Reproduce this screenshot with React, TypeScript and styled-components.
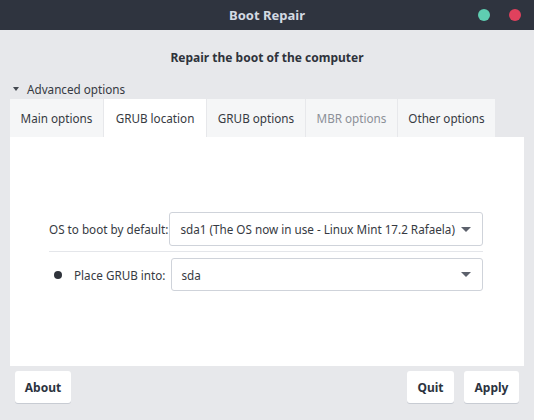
import React from "react";
import styled, { createGlobalStyle } from "styled-components";

const GlobalStyle = createGlobalStyle`
  html, body {
    margin: 0;
    padding: 0;
    background: #e7e8eb;
    font-family: "Noto Sans", "Open Sans", sans-serif;
    font-size: 11.7px;
    color: #363a42;
  }
`;

const Window = styled.div`
  width: 534px;
  height: 420px;
  display: flex;
  flex-direction: column;
  background: #e7e8eb;
  overflow: hidden;
`;

const TitleBar = styled.div`
  height: 30px;
  flex: none;
  background: #2f343f;
  position: relative;
  display: flex;
  align-items: center;
  justify-content: center;
  color: #d3dae3;
  font-weight: bold;
  font-size: 13px;
`;

const WinButtons = styled.div`
  position: absolute;
  right: 13px;
  top: 9px;
  display: flex;
  gap: 19px;
`;

const Dot = styled.span<{ $color: string }>`
  width: 12px;
  height: 12px;
  border-radius: 50%;
  background: ${(p) => p.$color};
`;

const Body = styled.div`
  flex: 1;
  display: flex;
  flex-direction: column;
  padding: 0 10px;
`;

const Heading = styled.div`
  margin-top: 19px;
  height: 18px;
  line-height: 18px;
  text-align: center;
  font-weight: bold;
  font-size: 12px;
  color: #2f333b;
`;

const Expander = styled.div`
  margin-top: 13px;
  height: 18px;
  display: flex;
  align-items: center;
  gap: 8px;
  padding-left: 3px;
`;

const Arrow = styled.span`
  width: 0;
  height: 0;
  border-left: 3.5px solid transparent;
  border-right: 3.5px solid transparent;
  border-top: 4px solid #444850;
`;

const Tabs = styled.div`
  margin-top: 1px;
  height: 38px;
  display: flex;
`;

const Tab = styled.div<{ $active?: boolean; $disabled?: boolean; $w: number }>`
  width: ${(p) => p.$w}px;
  display: flex;
  align-items: center;
  justify-content: center;
  background: ${(p) => (p.$active ? "#ffffff" : "#f5f6f7")};
  color: ${(p) => (p.$disabled ? "#8c9098" : "#363a42")};
  border-right: 1px solid #e7e8eb;
  box-sizing: border-box;
`;

const Panel = styled.div`
  height: 229px;
  background: #ffffff;
  display: flex;
  flex-direction: column;
  justify-content: center;
  padding: 0 41px 0 39px;
`;

const Row = styled.div`
  display: flex;
  align-items: center;
`;

const Separator = styled.div`
  height: 1px;
  background: #e4e6ea;
  margin: 5px 0 6px;
`;

const Label = styled.span`
  white-space: nowrap;
  margin-right: 1px;
`;

const Bullet = styled.span`
  width: 8px;
  height: 8px;
  border-radius: 50%;
  background: #2f333b;
  margin: 0 12px 0 5px;
`;

const Combo = styled.div<{ $h: number; $gap: number }>`
  flex: 1;
  min-width: 0;
  margin-left: ${(p) => p.$gap}px;
  height: ${(p) => p.$h}px;
  box-sizing: border-box;
  border: 1px solid #cfd3da;
  border-radius: 3px;
  display: flex;
  align-items: center;
  justify-content: space-between;
  padding: 0 11px 0 10px;
  white-space: nowrap;
`;

const ComboArrow = styled.span`
  flex: none;
  width: 0;
  height: 0;
  border-left: 5px solid transparent;
  border-right: 5px solid transparent;
  border-top: 5px solid #5c616c;
`;

const Footer = styled.div`
  margin-top: 5px;
  display: flex;
  padding: 0 5px;
  gap: 10px;
`;

const Spacer = styled.div`
  flex: 1;
`;

const Button = styled.button<{ $w: number }>`
  width: ${(p) => p.$w}px;
  height: 32px;
  border: none;
  border-radius: 3px;
  background: #ffffff;
  box-shadow: 0 1px 0 #c8ccd3;
  font-family: inherit;
  font-size: 12px;
  font-weight: bold;
  color: #2c3340;
  padding: 0;
`;

const tabs = [
  { label: "Main options", w: 94 },
  { label: "GRUB location", w: 103, active: true },
  { label: "GRUB options", w: 99 },
  { label: "MBR options", w: 92, disabled: true },
  { label: "Other options", w: 98 },
];

export default function App() {
  return (
    <Window>
      <GlobalStyle />
      <TitleBar>
        Boot Repair
        <WinButtons>
          <Dot $color="#5fcdb1" />
          <Dot $color="#e0415d" />
        </WinButtons>
      </TitleBar>
      <Body>
        <Heading>Repair the boot of the computer</Heading>
        <Expander>
          <Arrow />
          Advanced options
        </Expander>
        <Tabs>
          {tabs.map((t) => (
            <Tab key={t.label} $w={t.w} $active={t.active} $disabled={t.disabled}>
              {t.label}
            </Tab>
          ))}
        </Tabs>
        <Panel>
          <Row>
            <Label>OS to boot by default:</Label>
            <Combo $h={34} $gap={0}>
              sda1 (The OS now in use - Linux Mint 17.2 Rafaela)
              <ComboArrow />
            </Combo>
          </Row>
          <Separator />
          <Row>
            <Bullet />
            <Label>Place GRUB into:</Label>
            <Combo $h={33} $gap={4}>
              sda
              <ComboArrow />
            </Combo>
          </Row>
        </Panel>
        <Footer>
          <Button $w={56}>About</Button>
          <Spacer />
          <Button $w={47}>Quit</Button>
          <Button $w={55}>Apply</Button>
        </Footer>
      </Body>
    </Window>
  );
}
